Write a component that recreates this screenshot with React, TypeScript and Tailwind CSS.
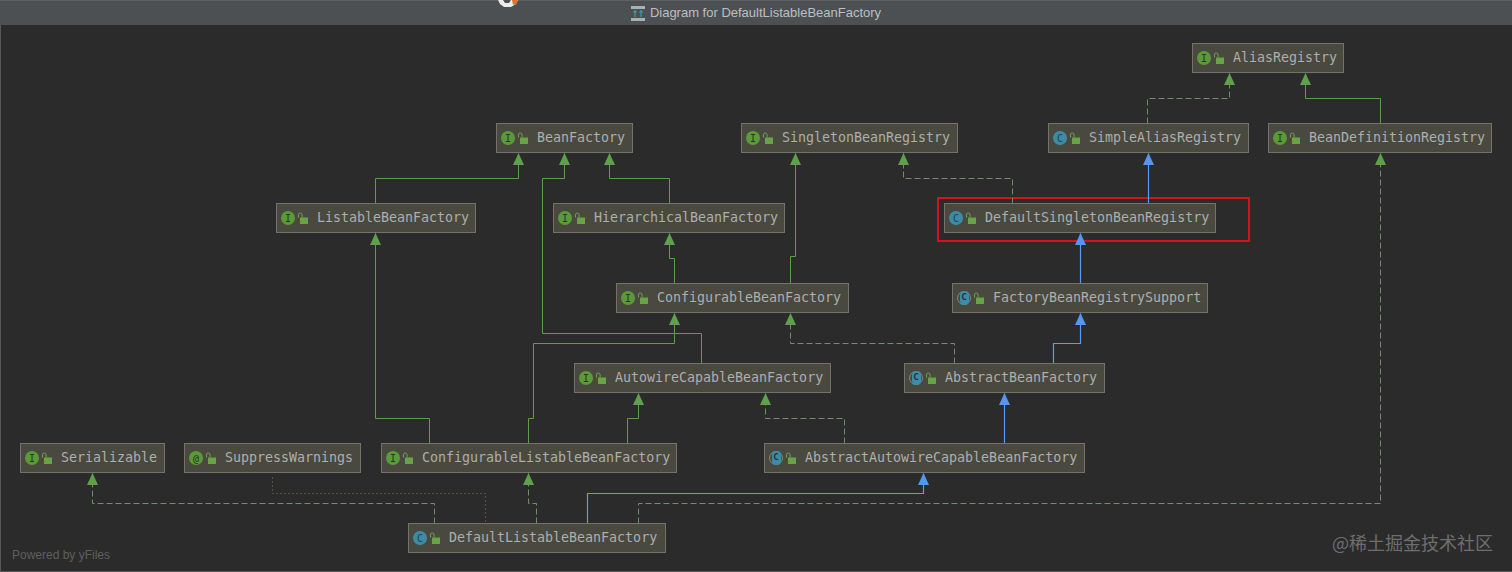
import React from 'react';

type Kind = 'interface' | 'class' | 'abstract' | 'annotation';

interface DiagramNode {
  label: string;
  x: number;
  y: number;
  w: number;
  kind: Kind;
}

interface Edge {
  points: number[][];
  style: 'solid' | 'dashed' | 'blue' | 'dotted';
}

// y values are page coordinates, canvas starts under the 25px title bar
const HEADER = 25;

const nodes: DiagramNode[] = [
  { label: 'AliasRegistry', x: 1192, y: 43, w: 152, kind: 'interface' },
  { label: 'BeanFactory', x: 496, y: 123, w: 137, kind: 'interface' },
  { label: 'SingletonBeanRegistry', x: 741, y: 123, w: 217, kind: 'interface' },
  { label: 'SimpleAliasRegistry', x: 1048, y: 123, w: 201, kind: 'class' },
  { label: 'BeanDefinitionRegistry', x: 1268, y: 123, w: 224, kind: 'interface' },
  { label: 'ListableBeanFactory', x: 276, y: 203, w: 200, kind: 'interface' },
  { label: 'HierarchicalBeanFactory', x: 553, y: 203, w: 232, kind: 'interface' },
  { label: 'DefaultSingletonBeanRegistry', x: 944, y: 203, w: 272, kind: 'class' },
  { label: 'ConfigurableBeanFactory', x: 616, y: 283, w: 233, kind: 'interface' },
  { label: 'FactoryBeanRegistrySupport', x: 952, y: 283, w: 256, kind: 'abstract' },
  { label: 'AutowireCapableBeanFactory', x: 574, y: 363, w: 257, kind: 'interface' },
  { label: 'AbstractBeanFactory', x: 904, y: 363, w: 201, kind: 'abstract' },
  { label: 'Serializable', x: 20, y: 443, w: 145, kind: 'interface' },
  { label: 'SuppressWarnings', x: 184, y: 443, w: 177, kind: 'annotation' },
  { label: 'ConfigurableListableBeanFactory', x: 381, y: 443, w: 296, kind: 'interface' },
  { label: 'AbstractAutowireCapableBeanFactory', x: 764, y: 443, w: 321, kind: 'abstract' },
  { label: 'DefaultListableBeanFactory', x: 408, y: 523, w: 258, kind: 'class' },
];

const edges: Edge[] = [
  { style: 'dashed', points: [[1147, 123], [1147, 98], [1229, 98], [1229, 73]] },
  { style: 'solid', points: [[1380, 123], [1380, 98], [1305, 98], [1305, 73]] },
  { style: 'blue', points: [[1148, 203], [1148, 153]] },
  { style: 'dashed', points: [[1012, 203], [1012, 178], [903, 178], [903, 153]] },
  { style: 'blue', points: [[1080, 283], [1080, 233]] },
  { style: 'blue', points: [[1053, 363], [1053, 343], [1080, 343], [1080, 313]] },
  { style: 'dashed', points: [[954, 363], [954, 343], [790, 343], [790, 313]] },
  { style: 'solid', points: [[790, 283], [790, 256], [795, 256], [795, 153]] },
  { style: 'solid', points: [[674, 283], [674, 258], [669, 258], [669, 233]] },
  { style: 'solid', points: [[669, 203], [669, 178], [609, 178], [609, 153]] },
  { style: 'solid', points: [[375, 203], [375, 178], [518, 178], [518, 153]] },
  { style: 'solid', points: [[701, 363], [701, 333], [542, 333], [542, 178], [564, 178], [564, 153]] },
  { style: 'solid', points: [[429, 443], [429, 418], [375, 418], [375, 233]] },
  { style: 'solid', points: [[528, 443], [528, 418], [533, 418], [533, 343], [674, 343], [674, 313]] },
  { style: 'solid', points: [[627, 443], [627, 418], [638, 418], [638, 393]] },
  { style: 'dashed', points: [[844, 443], [844, 418], [765, 418], [765, 393]] },
  { style: 'blue', points: [[1004, 443], [1004, 393]] },
  { style: 'dashed', points: [[434, 523], [434, 503], [92, 503], [92, 473]] },
  { style: 'dotted', points: [[272, 477], [272, 493], [485, 493], [485, 523]] },
  { style: 'dashed', points: [[536, 523], [536, 503], [528, 503], [528, 473]] },
  { style: 'blue', points: [[587, 523], [587, 493], [923, 493], [923, 473]] },
  { style: 'dashed', points: [[638, 523], [638, 503], [1380, 503], [1380, 153]] },
];

function LockIcon() {
  return (
    <svg width="11" height="12" viewBox="0 0 11 12" className="shrink-0">
      <path d="M1.5 5.5V2.8a1.8 1.8 0 0 1 3.6 0V5.5" fill="none" stroke="#6ea152" strokeWidth="1" />
      <rect x="3" y="5.5" width="8" height="6.5" fill="#6aa347" />
    </svg>
  );
}

function KindIcon({ kind }: { kind: Kind }) {
  if (kind === 'abstract') {
    return (
      <span className="relative flex h-[14px] w-[14px] shrink-0 items-center justify-center rounded-full border border-[#7a8a8c]">
        <span className="flex h-[14px] w-[9px] items-center justify-center rounded-[4px] bg-[#3d8ba6] text-[9px] font-bold text-[#23343a]">
          C
        </span>
      </span>
    );
  }
  const bg = kind === 'class' ? 'bg-[#3d8ba6] text-[#1f4452]' : 'bg-[#5a9a38] text-[#24391b]';
  return (
    <span className={`flex h-[14px] w-[14px] shrink-0 items-center justify-center rounded-full text-[10px] ${bg}`}>
      {kind === 'interface' ? 'I' : kind === 'class' ? 'C' : '@'}
    </span>
  );
}

function NodeBox({ node }: { node: DiagramNode }) {
  return (
    <div
      className="absolute flex h-[30px] items-center border border-[#73736c] bg-[#4a493f] pl-[4px] font-['DejaVu_Sans_Mono',monospace] text-[13.3px] text-[#acaeb0]"
      style={{ left: node.x, top: node.y - HEADER, width: node.w }}
    >
      <KindIcon kind={node.kind} />
      <span className="ml-[2px]">
        <LockIcon />
      </span>
      <span className="ml-[9px] whitespace-pre">{node.label}</span>
    </div>
  );
}

function EdgeLine({ edge }: { edge: Edge }) {
  const stroke = edge.style === 'blue' ? '#5b9bf0' : edge.style === 'dotted' ? '#7a7a55' : edge.style === 'dashed' ? '#6f8f68' : '#5f9c50';
  const dash = edge.style === 'dashed' ? '6 3' : edge.style === 'dotted' ? '1 3' : undefined;
  const pts = edge.points.map(([x, y]) => `${x + 0.5},${y - HEADER + 0.5}`).join(' ');
  const [tipX, tipY] = edge.points[edge.points.length - 1];
  const top = tipY - HEADER;
  return (
    <g>
      <polyline points={pts} fill="none" stroke={stroke} strokeWidth={edge.style === 'blue' ? 1.2 : 1} strokeDasharray={dash} />
      {edge.style !== 'dotted' && (
        <polygon
          points={`${tipX + 0.5},${top} ${tipX + 6},${top + 12} ${tipX - 5},${top + 12}`}
          fill={edge.style === 'blue' ? '#5596ee' : '#5fa04e'}
        />
      )}
    </g>
  );
}

export default function App() {
  return (
    <div className="flex h-[572px] w-[1512px] flex-col overflow-hidden bg-[#2b2b2b] font-['Liberation_Sans',sans-serif]">
      <div className="relative flex h-[25px] shrink-0 items-center justify-center gap-[5px] border-t border-[#5e6163] bg-[#4c5052]">
        <svg width="24" height="7" viewBox="0 0 24 7" className="absolute left-[497px] top-[-1px]">
          <path d="M1 0h20l-2 4-5 3H7L3 4z" fill="#ececec" />
          <path d="M6 0h8l-2 3H8z" fill="#4c5052" />
          <path d="M15 0h6l-2 4-3 1z" fill="#e0722f" />
        </svg>
        <svg width="14" height="15" viewBox="0 0 14 15">
          <rect x="0" y="0" width="14" height="3" fill="#a9b0b4" />
          <rect x="0" y="12" width="14" height="3" fill="#a9b0b4" />
          <path d="M4 11V5M2.5 6.5 4 4.5l1.5 2M10 11V5M8.5 6.5 10 4.5l1.5 2" fill="none" stroke="#2fb0c4" strokeWidth="1" />
        </svg>
        <span className="text-[13px] text-[#bcbfc1]">Diagram for DefaultListableBeanFactory</span>
      </div>

      <div className="relative flex-1 shadow-[inset_1px_-1px_0_#55585a]">
        <div className="absolute left-[937px] top-[172px] h-[45px] w-[313px] border-2 border-[#d6101c]" />
        <svg width="1512" height="547" className="absolute left-0 top-0">
          {edges.map((edge, index) => (
            <EdgeLine key={index} edge={edge} />
          ))}
        </svg>
        {nodes.map((node) => (
          <NodeBox key={node.label} node={node} />
        ))}
        <span className="absolute bottom-[8px] left-[12px] text-[12px] text-[#5f5f5f]">Powered by yFiles</span>
        <span className="absolute bottom-[18px] right-[19px] font-['Noto_Sans_CJK_SC',sans-serif] text-[18px] leading-[24px] text-[#6e6e6e]">
          @稀土掘金技术社区
        </span>
      </div>
    </div>
  );
}
